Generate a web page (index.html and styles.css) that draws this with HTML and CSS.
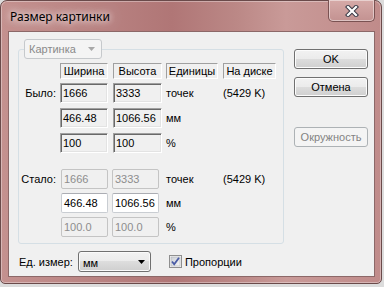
FILE: index.html
```html
<!DOCTYPE html>
<html>
<head>
<meta charset="utf-8">
<link rel="stylesheet" href="styles.css">
</head>
<body>
<div class="window">
  <div class="titlebar">
    <span class="title">Размер картинки</span>
    <div class="close">
      <svg width="14" height="12" viewBox="0 0 14 12"><path d="M3 2 L11 10 M11 2 L3 10" stroke="#3a3a46" stroke-width="4.2" stroke-linecap="square"/><path d="M3 2 L11 10 M11 2 L3 10" stroke="#ffffff" stroke-width="2.2" stroke-linecap="square"/></svg>
    </div>
  </div>
  <div class="client">
    <div class="left">
      <div class="group">
        <div class="combo pic disabled"><span>Картинка</span><svg class="arr" width="7" height="4" viewBox="0 0 7 4"><path d="M0 0 H7 L3.5 4 Z" fill="#a8a8a8"/></svg></div>
        <div class="grid g1">
          <div></div>
          <div class="hdr w48">Ширина</div>
          <div class="hdr w49">Высота</div>
          <div class="hdr w52">Единицы</div>
          <div class="hdr w53">На диске</div>

          <div class="lbl">Было:</div>
          <div class="ro w48">1666</div>
          <div class="ro w49">3333</div>
          <div class="txt">точек</div>
          <div class="txt">(5429 K)</div>

          <div></div>
          <div class="ro w48">466.48</div>
          <div class="ro w49">1066.56</div>
          <div class="txt">мм</div>
          <div></div>

          <div></div>
          <div class="ro w48">100</div>
          <div class="ro w49">100</div>
          <div class="txt">%</div>
          <div></div>
        </div>
        <div class="grid g2">
          <div class="lbl">Стало:</div>
          <div class="ed dis s1">1666</div>
          <div class="ed dis s2">3333</div>
          <div class="txt">точек</div>
          <div class="txt">(5429 K)</div>

          <div></div>
          <div class="ed s1">466.48</div>
          <div class="ed s2">1066.56</div>
          <div class="txt">мм</div>
          <div></div>

          <div></div>
          <div class="ed dis s1">100.0</div>
          <div class="ed dis s2">100.0</div>
          <div class="txt">%</div>
          <div></div>
        </div>
      </div>
      <div class="bottom">
        <span class="blabel">Ед. измер:</span>
        <div class="combo units"><span>мм</span><svg class="arr" width="7" height="4" viewBox="0 0 7 4"><path d="M0 0 H7 L3.5 4 Z" fill="#000"/></svg></div>
        <svg class="check" width="13" height="13" viewBox="0 0 13 13">
          <defs><linearGradient id="cb" x1="0" y1="0" x2="1" y2="1"><stop offset="0" stop-color="#cbcfd5"/><stop offset="1" stop-color="#f6f6f6"/></linearGradient></defs>
          <rect x="0.5" y="0.5" width="12" height="12" fill="#f4f4f4" stroke="#8f8f8f"/>
          <rect x="2" y="2" width="9" height="9" fill="url(#cb)" stroke="#aeb3b9" stroke-width="0.6"/>
          <path d="M3 6.5 L5.2 9.3 L10 2.8" fill="none" stroke="#4a5ca6" stroke-width="1.8"/>
        </svg>
        <span class="clabel">Пропорции</span>
      </div>
    </div>
    <div class="buttons">
      <div class="btn">OK</div>
      <div class="btn">Отмена</div>
      <div class="btn disabled gap">Окружность</div>
    </div>
  </div>
</div>
</body>
</html>
```

FILE: styles.css
```css
html, body {
  margin: 0;
  padding: 0;
}
body {
  width: 384px;
  height: 287px;
  background: #dcdcdc;
  overflow: hidden;
  font-family: "Liberation Sans", Arial, sans-serif;
  font-size: 11px;
  color: #000;
}
.window {
  box-sizing: border-box;
  width: 382px;
  height: 284px;
  border: 1px solid #6a4a4a;
  border-radius: 7px 7px 5px 5px;
  background: linear-gradient(90deg, #c4918f 0%, #b98382 25%, #b07676 45%, #bb8886 62%, #c99a98 75%, #c08b8a 100%);
  padding: 0 6px 6px 7px;
  display: flex;
  flex-direction: column;
  box-shadow: inset 0 0 0 1px rgba(255,255,255,0.35);
}
.titlebar {
  height: 30px;
  margin: 0 -6px 0 -7px;
  display: flex;
  justify-content: space-between;
  align-items: flex-start;
}
.title {
  font-family: "Noto Sans", "Open Sans", sans-serif;
  font-size: 12px;
  margin-top: 7px;
  margin-left: 9px;
  color: #000;
  text-shadow: 0 0 6px rgba(255,255,255,0.9), 0 0 12px rgba(255,255,255,0.7), 0 0 18px rgba(255,255,255,0.5);
}
.close {
  box-sizing: border-box;
  width: 47px;
  height: 22px;
  margin-right: 6px;
  margin-top: -1px;
  border: 1px solid #7a5252;
  border-top: none;
  border-radius: 0 0 5px 5px;
  background: linear-gradient(#d6aaa8, #c39291);
  box-shadow: inset 0 0 0 1px rgba(255,255,255,0.45);
  display: flex;
  align-items: center;
  justify-content: center;
}
.close svg { display: block; margin-top: 0px; }
.client {
  box-sizing: border-box;
  width: 367px;
  height: 246px;
  background: #f0f0f0;
  border: 1px solid #8c6868;
  padding: 17px 0 0 9px;
  display: flex;
  align-items: flex-start;
}
.left {
  width: 266px;
  display: flex;
  flex-direction: column;
}
.group {
  box-sizing: border-box;
  width: 266px;
  height: 195px;
  border: 1px solid #d5dfe5;
  border-radius: 3px;
  display: flex;
  flex-direction: column;
}
.combo {
  box-sizing: border-box;
  height: 20px;
  border: 1px solid #707070;
  border-radius: 3px;
  display: flex;
  align-items: center;
  justify-content: space-between;
  padding: 0 6px 0 4px;
}
.combo.disabled {
  border-color: #c6c9cc;
  background: #f4f4f4;
  color: #8a8a8a;
}
.pic {
  width: 78px;
  margin-top: -11px;
  margin-left: 5px;
}
.units {
  width: 73px;
  height: 21px;
  background: linear-gradient(#f2f2f2 0%, #ebebeb 50%, #dddddd 50%, #cfcfcf 100%);
  box-shadow: inset 0 0 0 1px #fafafa;
  padding: 0 5px 0 4px;
  margin-left: 5px;
}
.units span { margin-top: 2px; }
.arr { display: block; }
.grid {
  display: grid;
  grid-template-columns: 41px 53px 53px 57px 53px;
  row-gap: 5px;
  align-items: center;
}
.g1 {
  margin-top: 4px;
  grid-template-rows: 15px 20px 20px 20px;
}
.g2 {
  margin-top: 16px;
  grid-template-rows: 20px 20px 20px;
  row-gap: 4px;
}
.hdr {
  box-sizing: border-box;
  height: 16px;
  border-top: 1px solid #a0a0a0;
  border-left: 1px solid #a0a0a0;
  border-right: 1px solid #ffffff;
  border-bottom: 1px solid #ffffff;
  text-align: center;
  line-height: 14px;
}
.w48 { width: 48px; }
.w49 { width: 49px; }
.w52 { width: 52px; }
.w53 { width: 53px; }
.lbl {
  text-align: right;
  padding-right: 4px;
}
.txt { white-space: nowrap; }
.ro {
  box-sizing: border-box;
  height: 20px;
  border-top: 1px solid #a0a0a0;
  border-left: 1px solid #a0a0a0;
  border-right: 1px solid #ffffff;
  border-bottom: 1px solid #ffffff;
  box-shadow: inset 1px 1px 0 #696969, inset -1px -1px 0 #e3e3e3;
  padding-left: 2px;
  line-height: 18px;
  background: #f0f0f0;
}
.ed {
  box-sizing: border-box;
  height: 20px;
  border: 1px solid #c9cdd2;
  border-top-color: #abadb3;
  border-radius: 2px;
  background: #fff;
  padding-left: 2px;
  line-height: 18px;
}
.ed.dis {
  background: #f0f0f0;
  border-color: #c4c4c4;
  color: #8d8d8d;
}
.s1 { width: 47px; margin-left: 1px; }
.s2 { width: 47px; margin-left: -1px; }
.bottom {
  margin-top: 7px;
  height: 21px;
  display: flex;
  align-items: center;
}
.blabel { margin-left: 1px; }
.check { display: block; margin-left: 18px; }
.clabel { margin-left: 3px; }
.buttons {
  margin-left: 10px;
  display: flex;
  flex-direction: column;
}
.btn {
  box-sizing: border-box;
  width: 74px;
  height: 20px;
  border: 1px solid #707070;
  border-radius: 3px;
  background: linear-gradient(#f2f2f2 0%, #ebebeb 50%, #dddddd 50%, #cfcfcf 100%);
  box-shadow: inset 0 0 0 1px #fcfcfc;
  text-align: center;
  line-height: 18px;
  margin-bottom: 8px;
}
.btn.disabled {
  border-color: #adb2b5;
  background: #f4f4f4;
  box-shadow: none;
  color: #838383;
}
.btn.gap { margin-top: 22px; }
```
